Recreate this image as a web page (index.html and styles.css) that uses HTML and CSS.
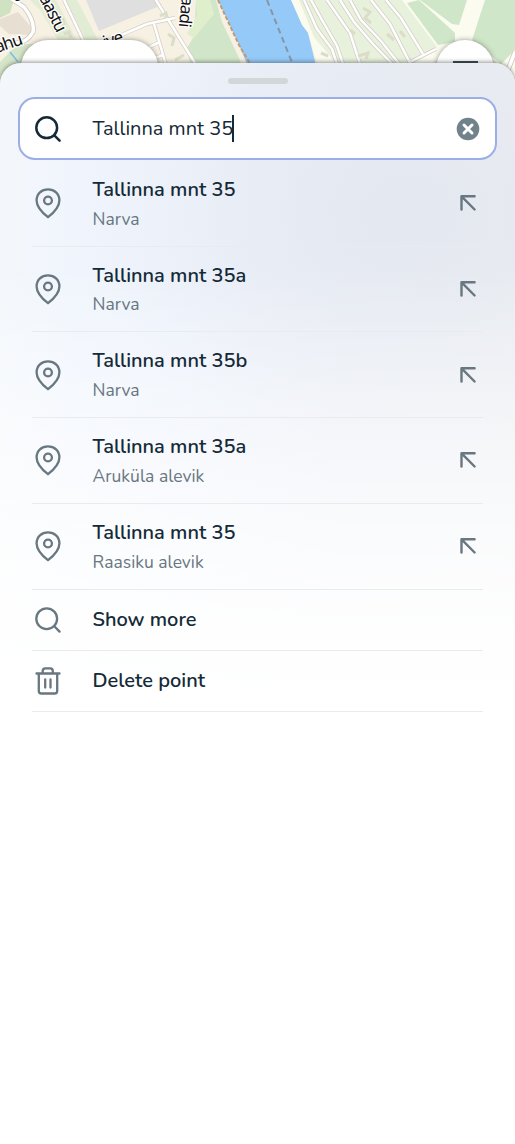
FILE: index.html
```html
<!DOCTYPE html>
<html lang="en">
<head>
<meta charset="utf-8">
<title>Address search</title>
<link rel="stylesheet" href="styles.css">
</head>
<body>
<svg width="0" height="0" class="defs" aria-hidden="true">
  <symbol id="pin" viewBox="0 0 32 32"><path d="M16 30.200C11.500 26.600 4.600 20.800 4.600 13.400C4.600 6.700 9.700 2.400 16 2.400S27.400 6.700 27.400 13.400C27.400 20.800 20.500 26.600 16 30.200Z"/><circle cx="16" cy="13.500" r="3.900"/></symbol>
  <symbol id="search" viewBox="0 0 32 32"><circle cx="14.700" cy="14.700" r="10.400"/><path d="M22.300 22.300L27.600 27.600"/></symbol>
  <symbol id="arrow" viewBox="0 0 32 32"><path d="M9.500 22.500V9.300H22.600M9.800 9.600L22.600 22.500"/></symbol>
  <symbol id="trash" viewBox="0 0 32 32"><path d="M4.500 8.500H27.500M6.800 8.500V26Q6.800 28.500 9.300 28.500H22.700Q25.200 28.500 25.200 26V8.500M10.700 8.500V6Q10.700 3.300 13.200 3.300H18.300Q20.800 3.300 20.800 6V8.500M13.200 14.500V22.500M18.500 14.500V22.500"/></symbol>
</svg>
<div class="map">
  <svg class="map-canvas" viewBox="0 0 515 90" width="515" height="90">
    <rect width="515" height="90" fill="#f7f1e3"/>
    <path d="M0 0H14L10 13L0 18Z" fill="#cfe3c2"/>
    <path d="M0 19L18 12L32 28L30 35L9 34L0 26Z" fill="#e6dfd2"/>
    <path d="M0 62L18 44L45 44L50 90H0Z" fill="#d5e5c8"/>
    <path d="M30 0H56L82 51L95 90H78L58 40L40 10Z" fill="#e3ecd4"/>
    <path d="M66 0H77L102 48H90Z" fill="#e1ecd4"/>
    <path d="M86 0H155L162 5L99 31Z" fill="#e0dfdf"/>
    <path d="M196 0H216L222 22L240 60L246 90H195L187 48L194 36Z" fill="#d1e6c9"/>
    <path d="M196 0H210L214 14L194 38L187 34L197 15Z" fill="#e0efcb"/>
    <path d="M218 0H292L303 26L308 33L322 90H258L239 45Z" fill="#94c9f8"/>
    <path d="M218 0L239 45L257 75" fill="none" stroke="#c09a75" stroke-width="2" stroke-dasharray="4 2"/>
    <path d="M267 0L295 70" fill="none" stroke="#8497a6" stroke-width="2" stroke-dasharray="6 4"/>
    <path d="M291 0H515V90H325L308 32L302 25Z" fill="#fbfbef"/>
    <path d="M299 0H402L437 47L408 68H340L314 37Z" fill="#e8f1dc"/>
    <path d="M407 3L419 0L455 33V42L438 45Z M420 0H467L459 25L452 24Z M485 0H515V50L501 64L472 40Z" fill="#cfe6c9"/>
    <path d="M304 0L317 29L332 49L339 70M311 0L322 20L337 46L345 70M327 0L350 33L362 70M340 0L354 22L373 44L397 69M350 0L361 20L381 41L404 70M371 0L390 24L411 65M386 0L401 18L423 54M410 62L436 49M64 0L84 42M154 -3L195 63M110 40L147 24L175 18M154 24L166 65M149 47L160 42M155 58L163 55" fill="none" stroke="#d3cec5" stroke-width="4"/>
    <path d="M304 0L317 29L332 49L339 70M311 0L322 20L337 46L345 70M327 0L350 33L362 70M340 0L354 22L373 44L397 69M350 0L361 20L381 41L404 70M371 0L390 24L411 65M386 0L401 18L423 54M410 62L436 49M64 0L84 42M154 -3L195 63M110 40L147 24L175 18M154 24L166 65M149 47L160 42M155 58L163 55" fill="none" stroke="#fff" stroke-width="2.500"/>
    <path d="M10 -2L24 7Q35 21 33 32Q27 43 15 43L0 47M515 52L508 70" fill="none" stroke="#cdc8c0" stroke-width="5"/>
    <path d="M10 -2L24 7Q35 21 33 32Q27 43 15 43L0 47M515 52L508 70" fill="none" stroke="#fff" stroke-width="3.500"/>
    <path d="M58 16l5 3 1 6M64 34l5-2 2 6M160 16l6-3 1 5M168 34l6 4-2 8M175 60l9-5M363 8l7 4-5 6 6 5M350 30l5 4M387 34l7 6M321 53l7 3M358 56l10-3-2 6M400 31l5 6" fill="none" stroke="#dcddc8" stroke-width="3"/>
    <path d="M10 52L18 62" stroke="#77bde9" stroke-width="1.500"/>
    <g class="map-label">
      <text transform="translate(-3 53) rotate(-19)">ahu</text>
      <text transform="translate(39 -2) rotate(63)">aastu</text>
      <text transform="translate(182 -4) rotate(96)">aadi</text>
      <text transform="translate(105 48) rotate(-18)">ive</text>
      <text transform="translate(11 -4) rotate(45)">o</text>
    </g>
  </svg>
  <div class="map-pill"></div>
  <div class="map-button"><span class="map-button-bar"></span></div>
</div>
<main class="sheet">
  <div class="handle"></div>
  <div class="field">
    <svg class="icon icon-dark"><use href="#search"/></svg>
    <div class="field-value"><span class="query">Tallinna mnt 35</span><span class="caret"></span></div>
    <svg class="clear" viewBox="0 0 24 24"><circle cx="12" cy="12" r="11.300" fill="#72828b"/><path d="M8 8L16 16M16 8L8 16" stroke="#fff" stroke-width="3" stroke-linecap="round"/></svg>
  </div>
  <div class="list">
    <div class="row"><svg class="icon"><use href="#pin"/></svg><div class="text"><div class="title">Tallinna mnt 35</div><div class="sub">Narva</div></div><svg class="icon arrow"><use href="#arrow"/></svg></div>
    <div class="row tight"><svg class="icon"><use href="#pin"/></svg><div class="text"><div class="title">Tallinna mnt 35a</div><div class="sub">Narva</div></div><svg class="icon arrow"><use href="#arrow"/></svg></div>
    <div class="row"><svg class="icon"><use href="#pin"/></svg><div class="text"><div class="title">Tallinna mnt 35b</div><div class="sub">Narva</div></div><svg class="icon arrow"><use href="#arrow"/></svg></div>
    <div class="row"><svg class="icon"><use href="#pin"/></svg><div class="text"><div class="title">Tallinna mnt 35a</div><div class="sub">Aruküla alevik</div></div><svg class="icon arrow"><use href="#arrow"/></svg></div>
    <div class="row"><svg class="icon"><use href="#pin"/></svg><div class="text"><div class="title">Tallinna mnt 35</div><div class="sub">Raasiku alevik</div></div><svg class="icon arrow"><use href="#arrow"/></svg></div>
    <div class="row action"><svg class="icon"><use href="#search"/></svg><div class="title">Show more</div></div>
    <div class="row action"><svg class="icon"><use href="#trash"/></svg><div class="title">Delete point</div></div>
  </div>
</main>
</body>
</html>
```
FILE: styles.css
```css
* { box-sizing: border-box; }
body { margin: 0; width: 515px; height: 1144px; overflow: hidden; background: #fff; color: #152a37; font-family: Nunito, Lato, "Open Sans", sans-serif; }
.defs { position: absolute; }
.map { position: relative; height: 63px; }
.map-canvas { position: absolute; top: 0; left: 0; }
.map-label { font: 17px "Noto Sans", sans-serif; letter-spacing: -1px; fill: #111; stroke: #fff; stroke-width: 2.5px; paint-order: stroke; }
.map-pill, .map-button { position: absolute; top: 40px; background: #fff; box-shadow: 0 0 5px rgba(50, 50, 40, .5); }
.map-pill { left: 21px; width: 137px; height: 58px; border-radius: 27px; }
.map-button { left: 436px; width: 58px; height: 58px; border-radius: 50%; display: flex; justify-content: center; padding-top: 21px; }
.map-button-bar { width: 25px; height: 3px; background: #37474f; }
.sheet {
  position: relative; height: 1081px; padding: 15px 18px 0; border-radius: 21px 21px 0 0;
  box-shadow: 0 -1px 4px rgba(40, 45, 40, .5);
  background:
    linear-gradient(to bottom, rgba(255,255,255,0) 0, rgba(255,255,255,0) 200px, rgba(255,255,255,.4) 330px, rgba(255,255,255,.75) 460px, rgba(255,255,255,.93) 560px, #fff 650px),
    linear-gradient(to right, rgba(244,247,250,.7), rgba(244,247,250,0) 70px),
    radial-gradient(ellipse 320px 260px at 410px 150px, rgba(226,230,239,.75) 0, rgba(227,231,240,.35) 50%, rgba(227,231,240,0) 100%),
    linear-gradient(to right, #f2f7fe, #edf2fb 35%, #e9edf5 65%, #eaedf1);
}
.handle { width: 60px; height: 6px; margin: 0 auto 13px; border-radius: 3px; background: #d2d7da; }
.field { display: flex; align-items: center; height: 63px; padding: 0 15px 0 12px; border: 2px solid #9bafe6; border-radius: 17px; background: #fff; }
.icon { flex: none; width: 32px; height: 32px; fill: none; stroke: #687780; stroke-width: 2.3; stroke-linecap: round; stroke-linejoin: round; }
.icon-dark { stroke: #152a37; stroke-width: 2.5; }
.field-value { flex: 1; display: flex; align-items: center; margin-left: 28.5px; }
.query { font-size: 20px; line-height: 28px; width: 139.5px; white-space: nowrap; }
.caret { width: 2px; height: 27px; background: #152a37; }
.clear { width: 24px; height: 24px; }
.list { padding: 0 14px; }
.row { display: flex; align-items: center; height: 85.75px; border-bottom: 1px solid #e9ebed; }
.row:first-child { height: 86.5px; }
.row .text { flex: 1; padding-top: 1px; }
.row:first-child .text { padding-top: 3px; }
.row.tight .text { padding-top: 2px; }
.row .title { margin-left: 28.5px; }
.title { font-size: 20px; font-weight: 600; line-height: 28px; }
.sub { margin: 2px 0 0 28.5px; font-size: 17.5px; line-height: 26px; color: #687780; }
.tight .sub { margin-top: 1px; }
.arrow { margin-right: -1px; stroke-width: 2.4; }
.row.action { height: 61px; }
```
